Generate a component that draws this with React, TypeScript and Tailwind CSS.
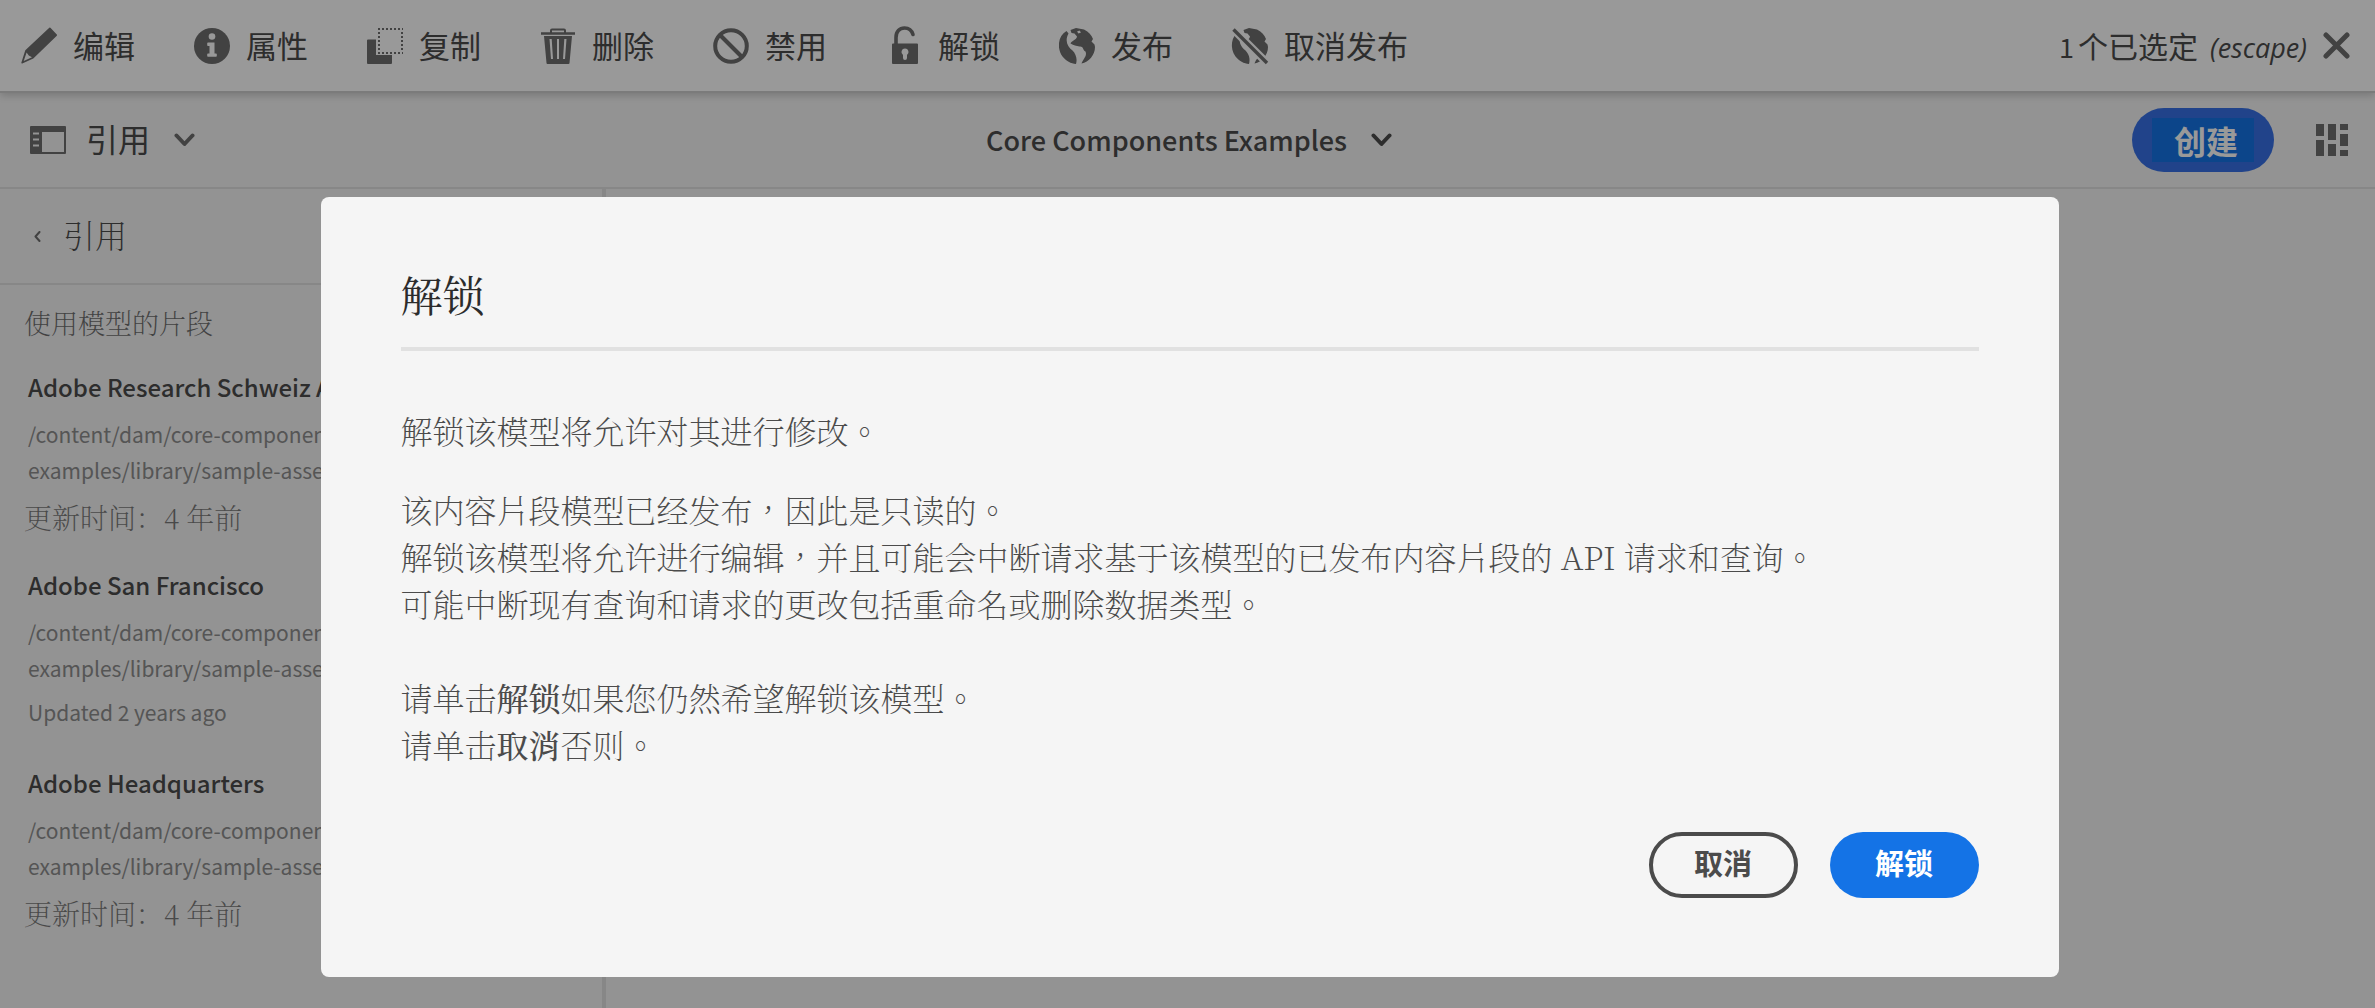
import React from "react";

const Pencil = () => (
  <svg className="h-9 w-9 overflow-visible" viewBox="0 0 36 36" fill="currentColor" aria-hidden="true">
    <path fillRule="evenodd" d="M28.300 -.3a.8.8 0 0 1 1.100 0L35.800 6.600a.9.900 0 0 1 0 1.200L12.300 30.500 1.300 35.400a.7.700 0 0 1-.9-.9L4.300 22.300ZM5.600 24.500 2.700 33l8.300-3.700-3.200-1.800Z" />
  </svg>
);

const Info = () => (
  <svg className="h-9 w-9" viewBox="0 0 36 36" aria-hidden="true">
    <circle cx="18" cy="18" r="18" fill="currentColor" />
    <circle cx="18" cy="8.500" r="3.300" fill="#fff" />
    <path d="M14 14.500h6.500v11H22a.8.8 0 0 1 .8.8V28a.8.8 0 0 1-.8.800h-8a.8.8 0 0 1-.8-.8v-1.700a.8.8 0 0 1 .8-.8h1.500V18H14a.8.8 0 0 1-.8-.8v-1.900a.8.8 0 0 1 .8-.8Z" fill="#fff" />
  </svg>
);

const CopyIcon = () => (
  <svg className="h-9 w-9" viewBox="0 0 36 36" aria-hidden="true">
    <path d="M1 11.500h8V27h16v8a1 1 0 0 1-1 1H1a1 1 0 0 1-1-1V12.500a1 1 0 0 1 1-1Z" fill="currentColor" />
    <path d="M11 1H36M11 25H36M12 4V24M35 4V24" fill="none" stroke="currentColor" strokeWidth="2" strokeDasharray="2 2" />
  </svg>
);

const Trash = () => (
  <svg className="h-9 w-9" viewBox="0 0 36 36" fill="none" stroke="currentColor" aria-hidden="true">
    <path d="M11 5V2.500a1 1 0 0 1 1-1h12a1 1 0 0 1 1 1V5" strokeWidth="2" />
    <path d="M1 5.500H35" strokeWidth="2.500" />
    <path fillRule="evenodd" stroke="none" fill="currentColor" d="M4 8H32L29.500 35a1 1 0 0 1-1 1H7.500a1 1 0 0 1-1-1ZM9.500 11l1.500 20h2L11.700 11ZM17 11v20h2V11ZM24.300 11 23 31h2L26.500 11Z" />
  </svg>
);

const Ban = () => (
  <svg className="h-9 w-9" viewBox="0 0 36 36" fill="none" stroke="currentColor" strokeWidth="4" aria-hidden="true">
    <circle cx="18" cy="18" r="15.800" />
    <path d="M7 7 29 29" />
  </svg>
);

const Unlock = () => (
  <svg className="h-9 w-9 overflow-visible" viewBox="0 0 36 36" aria-hidden="true">
    <path d="M10 17V9.500C10 3.500 13.500 0 18.500 0c4.300 0 7.300 2.500 8.500 6.500" fill="none" stroke="currentColor" strokeWidth="3.600" strokeLinecap="round" />
    <path fillRule="evenodd" fill="currentColor" d="M7 15.500H31a1 1 0 0 1 1 1V35a1 1 0 0 1-1 1H7a1 1 0 0 1-1-1V16.500a1 1 0 0 1 1-1ZM19 20.500a3.500 3.500 0 0 0-2 6.400V30a2 2 0 0 0 4 0V26.900A3.500 3.500 0 0 0 19 20.500Z" />
  </svg>
);

const GLOBE_PATH =
  "M7.500 3C-1 8-2.500 20 3.500 28.500 7 33 12 35.700 17 36 18.500 31 17 26 13.500 22.500 8.500 18.500 5.500 13 9.500 5.500ZM11.500 2 17 0 25 1.400C30 4 32.500 7 34 11L32.500 13.500 35.500 16.500 36 19C36 27 30 34 22.500 35.500 24 31 28.500 28 26.500 23.500 23.500 22.500 25 18 20.500 18.500 17 18 15 17.500 11.500 15.500 12.500 12.500 17.500 12 18 8.500L15.500 5.500 12.500 5Z";

const Globe = () => (
  <svg className="h-9 w-9" viewBox="0 0 36 36" fill="currentColor" aria-hidden="true">
    <path d={GLOBE_PATH} />
    <path d="M18 3.500 20.500 2.500 22 4.500 19.500 5.500Z" fill="#fff" />
  </svg>
);

const GlobeOff = () => (
  <svg className="h-9 w-9 overflow-visible" viewBox="0 0 36 36" fill="currentColor" aria-hidden="true">
    <path d={GLOBE_PATH} />
    <path d="M-1 -1 37 37" stroke="#fff" strokeWidth="8" />
    <path d="M1.500 1.500 35 35" stroke="currentColor" strokeWidth="3.400" />
  </svg>
);

const Close = () => (
  <svg className="h-[27px] w-[27px]" viewBox="0 0 27 27" stroke="currentColor" strokeWidth="5" strokeLinecap="round" aria-hidden="true">
    <path d="M3 3 24 24M24 3 3 24" />
  </svg>
);

const Rail = () => (
  <svg className="h-7 w-9" viewBox="0 0 36 28" fill="currentColor" aria-hidden="true">
    <path fillRule="evenodd" d="M1 0H35a1 1 0 0 1 1 1V27a1 1 0 0 1-1 1H1a1 1 0 0 1-1-1V1a1 1 0 0 1 1-1ZM12 6V26H34V6ZM3 6.500v2h6v-2ZM3 12.500v2h6v-2ZM3 18.500v2h6v-2Z" />
  </svg>
);

const Layout = () => (
  <svg className="h-8 w-8" viewBox="0 0 32 32" fill="currentColor" aria-hidden="true">
    <path d="M0 0H8V12H0ZM0 16H8V32H0ZM12 0H20V16H12ZM12 20H20V32H12ZM24 0H32V6H24ZM24 10H32V22H24ZM24 26H32V32H24Z" />
  </svg>
);

const Chevron = () => (
  <svg className="h-[14px] w-[21px]" viewBox="0 0 21 14" fill="none" stroke="currentColor" strokeWidth="4" strokeLinecap="round" strokeLinejoin="round" aria-hidden="true">
    <path d="M2.500 2.500 10.500 11 18.500 2.500" />
  </svg>
);

const ChevronLeft = () => (
  <svg className="h-[11px] w-[7px] text-[#6e6e6e]" viewBox="0 0 7 11" fill="none" stroke="currentColor" strokeWidth="2" strokeLinecap="round" strokeLinejoin="round" aria-hidden="true">
    <path d="M5.500 1 1.500 5.500 5.500 10" />
  </svg>
);

const ACTIONS = [
  { label: "编辑", Icon: Pencil },
  { label: "属性", Icon: Info },
  { label: "复制", Icon: CopyIcon },
  { label: "删除", Icon: Trash },
  { label: "禁用", Icon: Ban },
  { label: "解锁", Icon: Unlock },
  { label: "发布", Icon: Globe },
  { label: "取消发布", Icon: GlobeOff },
];

const REFERENCES = [
  { title: "Adobe Research Schweiz AG", updated: "更新时间：4 年前", localized: true },
  { title: "Adobe San Francisco", updated: "Updated 2 years ago", localized: false },
  { title: "Adobe Headquarters", updated: "更新时间：4 年前", localized: true },
];

export default function App() {
  return (
    <div className="relative flex min-h-screen flex-col bg-[#f5f5f5] font-['Noto_Sans_CJK_SC',sans-serif] text-[#4b4b4b]">
      <header className="z-10 flex h-[93px] items-center justify-between border-b-2 border-[#cdcdcd] bg-white pl-[21px] pr-[25px] text-[31px] shadow-[0_2px_8px_rgba(0,0,0,0.2)]">
        <nav className="flex items-center gap-[59px]">
          {ACTIONS.map(({ label, Icon }) => (
            <button key={label} type="button" className="flex items-center gap-4">
              <span className="text-[#6e6e6e]">
                <Icon />
              </span>
              {label}
            </button>
          ))}
        </nav>
        <button type="button" className="flex items-center gap-4">
          <span className="flex items-baseline">
            <span className="text-[27px]">1</span>
            <span className="ml-1 mr-3 text-[30px]">个已选定</span>
            <em className="font-['Open_Sans',sans-serif] text-[27px]">(escape)</em>
          </span>
          <span className="text-[#6e6e6e]">
            <Close />
          </span>
        </button>
      </header>

      <div className="grid h-24 shrink-0 grid-cols-[1fr_auto_1fr] items-center border-b-2 border-[#e1e1e1] pl-[30px] pr-[27px]">
        <button type="button" className="flex items-center justify-self-start text-[32px]">
          <span className="text-[#6e6e6e]">
            <Rail />
          </span>
          <span className="ml-5 mr-6 pb-1">引用</span>
          <span className="text-[#6e6e6e]">
            <Chevron />
          </span>
        </button>
        <button type="button" className="flex items-center gap-6 text-[27px] font-medium">
          Core Components Examples
          <Chevron />
        </button>
        <div className="flex items-center gap-[42px] justify-self-end">
          <button type="button" className="rounded-full bg-[#3871e6] px-5 py-[10px] text-[32px] font-bold leading-[44px] text-white">
            <span className="block bg-[#1473e6] pl-[22px] pr-4">创建</span>
          </button>
          <button type="button" aria-label="布局" className="text-[#6e6e6e]">
            <Layout />
          </button>
        </div>
      </div>

      <div className="flex grow">
        <aside className="w-[606px] border-r-4 border-[#e1e1e1]">
          <button type="button" className="flex h-24 w-full items-center gap-[22px] border-b-2 border-[#e1e1e1] pl-[34px] font-['Noto_Serif_CJK_SC','Noto_Sans_CJK_SC',serif] text-[32px] font-extralight">
            <ChevronLeft />
            <span className="pb-1">引用</span>
          </button>
          <h2 className="mt-5 pl-6 font-['Noto_Serif_CJK_SC','Noto_Sans_CJK_SC',serif] text-[27px] font-extralight leading-9 text-[#6e6e6e]">使用模型的片段</h2>
          <ul className="mt-7 flex flex-col gap-8">
            {REFERENCES.map(({ title, updated, localized }) => (
              <li key={title} className="text-[21px] leading-9 text-[#8e8e8e]">
                <h3 className="mb-[11px] pl-7 text-[24px] font-medium leading-9 text-[#4b4b4b]">{title}</h3>
                <p className="pl-7">
                  /content/dam/core-components-
                  <br />
                  examples/library/sample-assets
                </p>
                {localized ? (
                  <p className="mt-[11px] pl-6 font-['Noto_Serif_CJK_SC','Noto_Sans_CJK_SC',serif] text-[28px] font-extralight text-[#7a7a7a]">{updated}</p>
                ) : (
                  <p className="mb-[3px] mt-2 pl-7">{updated}</p>
                )}
              </li>
            ))}
          </ul>
        </aside>
        <main className="grow" />
      </div>

      <div className="absolute inset-0 z-20 flex items-start justify-center bg-black/40 pl-1 pt-[197px]">
        <section
          role="dialog"
          aria-modal="true"
          aria-labelledby="dialog-title"
          className="w-full max-w-[1738px] rounded-lg bg-[#f5f5f5] px-20 pb-[79px] pt-[61px] font-['Noto_Serif_CJK_TC','Noto_Sans_CJK_TC',serif]"
        >
          <h2 id="dialog-title" className="border-b-4 border-[#e1e1e1] pb-[17px] text-[42px] font-normal leading-[72px] text-[#2c2c2c]">
            解锁
          </h2>
          <div className="mt-14 flex flex-col gap-8 text-[32px] font-extralight leading-[47px]">
            <p>解锁该模型将允许对其进行修改。</p>
            <p>
              该内容片段模型已经发布，因此是只读的。
              <br />
              解锁该模型将允许进行编辑，并且可能会中断请求基于该模型的已发布内容片段的 API 请求和查询。
              <br />
              可能中断现有查询和请求的更改包括重命名或删除数据类型。
              <br />
              <br />
              请单击<strong className="font-medium">解锁</strong>如果您仍然希望解锁该模型。
              <br />
              请单击<strong className="font-medium">取消</strong>否则。
            </p>
          </div>
          <div className="mt-16 flex justify-end gap-8 font-['Noto_Sans_CJK_SC',sans-serif] text-[29px] font-bold">
            <button type="button" className="h-[66px] w-[149px] rounded-full border-4 border-[#4b4b4b] pb-1">
              取消
            </button>
            <button type="button" className="h-[66px] w-[149px] rounded-full bg-[#1473e6] pb-1 text-white">
              解锁
            </button>
          </div>
        </section>
      </div>
    </div>
  );
}
